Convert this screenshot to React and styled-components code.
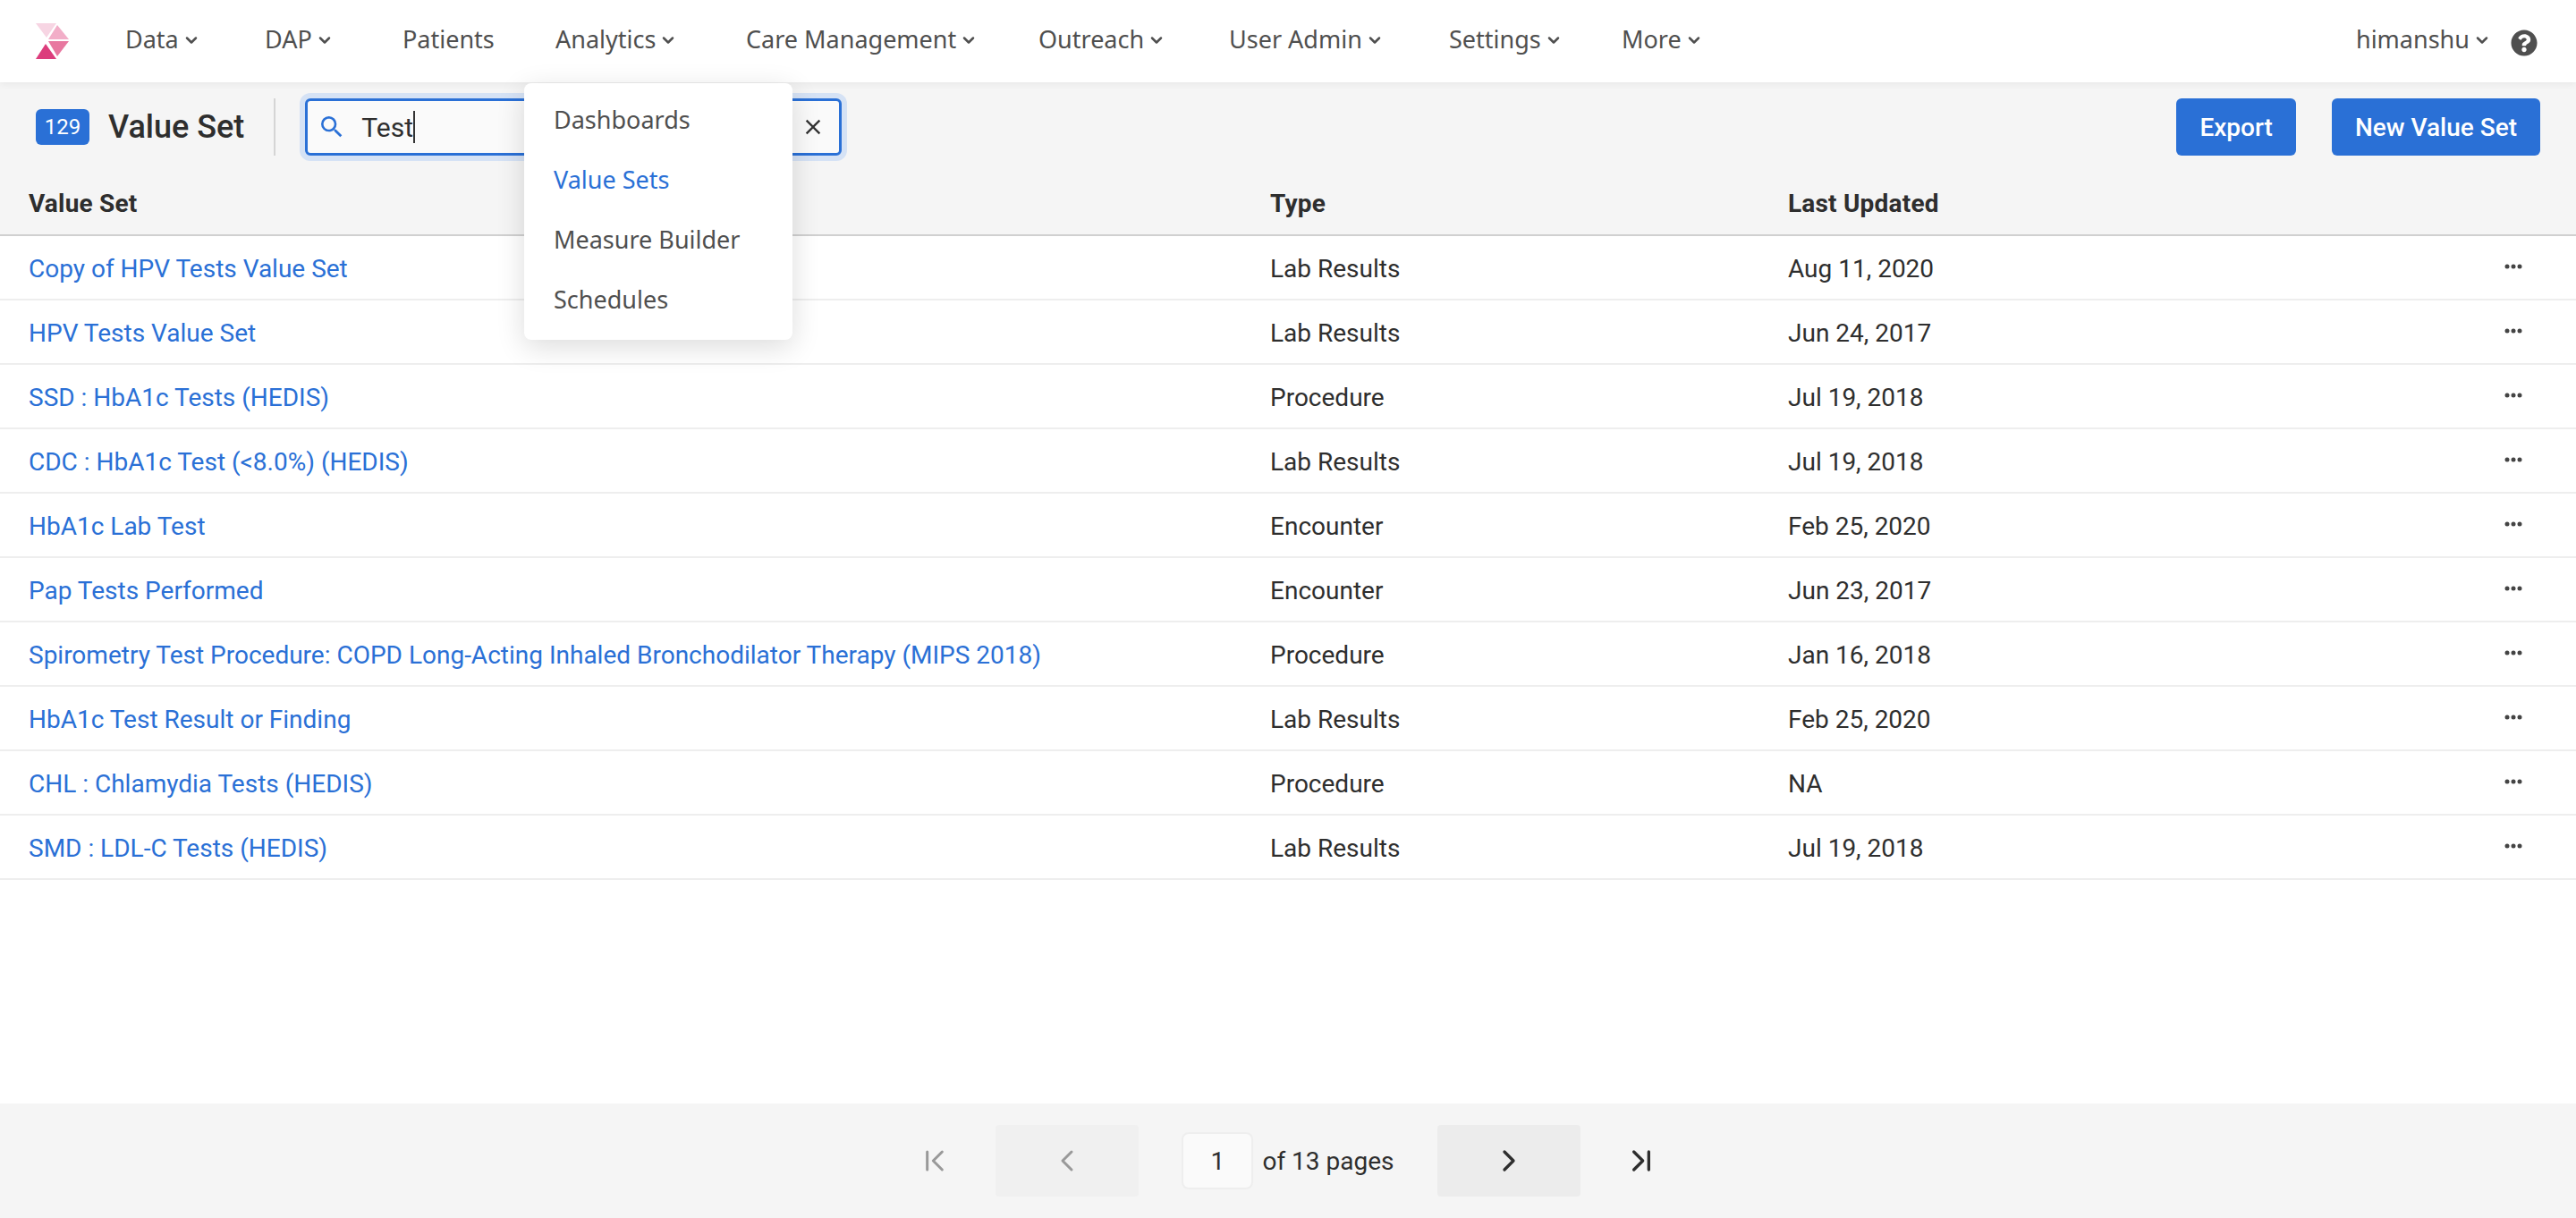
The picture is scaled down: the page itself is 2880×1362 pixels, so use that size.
import styled, { createGlobalStyle } from "styled-components";
import { FiChevronDown } from "react-icons/fi";
import { MdSearch, MdClose } from "react-icons/md";
import { FaQuestionCircle } from "react-icons/fa";
import { ChevronFirst, ChevronLast, ChevronLeft, ChevronRight } from "lucide-react";

const NAV = [
	{ label: "Data", width: 156, caret: true },
	{ label: "DAP", width: 154, caret: true },
	{ label: "Patients", width: 171 },
	{ label: "Analytics", width: 213, caret: true },
	{ label: "Care Management", width: 327, caret: true },
	{ label: "Outreach", width: 213, caret: true },
	{ label: "User Admin", width: 246, caret: true },
	{ label: "Settings", width: 193, caret: true },
	{ label: "More", width: 120, caret: true },
];

const MENU = ["Dashboards", "Value Sets", "Measure Builder", "Schedules"];

const ROWS = [
	["Copy of HPV Tests Value Set", "Lab Results", "Aug 11, 2020"],
	["HPV Tests Value Set", "Lab Results", "Jun 24, 2017"],
	["SSD : HbA1c Tests (HEDIS)", "Procedure", "Jul 19, 2018"],
	["CDC : HbA1c Test (<8.0%) (HEDIS)", "Lab Results", "Jul 19, 2018"],
	["HbA1c Lab Test", "Encounter", "Feb 25, 2020"],
	["Pap Tests Performed", "Encounter", "Jun 23, 2017"],
	["Spirometry Test Procedure: COPD Long-Acting Inhaled Bronchodilator Therapy (MIPS 2018)", "Procedure", "Jan 16, 2018"],
	["HbA1c Test Result or Finding", "Lab Results", "Feb 25, 2020"],
	["CHL : Chlamydia Tests (HEDIS)", "Procedure", "NA"],
	["SMD : LDL-C Tests (HEDIS)", "Lab Results", "Jul 19, 2018"],
];

const Logo = () => (
	<svg width='38' height='42' viewBox='0 0 38 42'>
		<path d='M0 1h23L12 17z' fill='#f7d5e3' />
		<path d='M24 3l13 16H14z' fill='#f2aec8' />
		<path d='M14 21h23L24 38z' fill='#e878a0' />
		<path d='M11 24l12 17H0z' fill='#dc3d7c' />
	</svg>
);

const Dots = () => (
	<svg width='20' height='6' viewBox='0 0 20 6'>
		<circle cx='3' cy='3' r='2.5' fill='#444' />
		<circle cx='10' cy='3' r='2.5' fill='#444' />
		<circle cx='17' cy='3' r='2.5' fill='#444' />
	</svg>
);

const App = () => {
	return (
		<Page>
			<GlobalStyle />
			<Nav>
				<LogoSlot>
					<Logo />
				</LogoSlot>
				{NAV.map((item) => (
					<NavItem key={item.label} $width={item.width}>
						{item.label}
						{item.caret && <FiChevronDown className='caret' />}
					</NavItem>
				))}
				<UserBox>
					<NavItem>
						himanshu
						<FiChevronDown className='caret' />
					</NavItem>
					<FaQuestionCircle className='help' />
				</UserBox>
			</Nav>
			<Menu>
				{MENU.map((item) => (
					<MenuItem key={item} $active={item === "Value Sets"}>
						{item}
					</MenuItem>
				))}
			</Menu>
			<Toolbar>
				<Badge>129</Badge>
				<Title>Value Set</Title>
				<Divider />
				<Search>
					<MdSearch className='search' />
					<SearchText>Test</SearchText>
					<Caret />
					<MdClose className='clear' />
				</Search>
				<Actions>
					<Button>Export</Button>
					<Button>New Value Set</Button>
				</Actions>
			</Toolbar>
			<HeadRow>
				<div>Value Set</div>
				<div>Type</div>
				<div>Last Updated</div>
			</HeadRow>
			<Body>
				{ROWS.map((row) => (
					<Row key={row[0]}>
						<RowLink>{row[0]}</RowLink>
						<div>{row[1]}</div>
						<div>{row[2]}</div>
						<RowMenu>
							<Dots />
						</RowMenu>
					</Row>
				))}
			</Body>
			<Footer>
				<EdgeButton $disabled>
					<ChevronFirst size={40} strokeWidth={1.8} />
				</EdgeButton>
				<PageButton $disabled>
					<ChevronLeft size={40} strokeWidth={1.8} />
				</PageButton>
				<PageField>
					<PageInput>1</PageInput>
					<PageCount>of 13 pages</PageCount>
				</PageField>
				<PageButton>
					<ChevronRight size={40} strokeWidth={2} />
				</PageButton>
				<EdgeButton>
					<ChevronLast size={40} strokeWidth={2} />
				</EdgeButton>
			</Footer>
		</Page>
	);
};

const GlobalStyle = createGlobalStyle`
	html, body {
		margin: 0;
		padding: 0;
		background: #fff;
	}
	* {
		box-sizing: border-box;
	}
`;

const Page = styled.div`
	position: relative;
	display: flex;
	flex-direction: column;
	height: 100vh;
	overflow: hidden;
	font-family: Roboto, "Liberation Sans", sans-serif;
	font-size: 28px;
	color: #2e2e2e;
`;

const Nav = styled.header`
	display: flex;
	align-items: center;
	height: 92px;
	flex: none;
	background: #fff;
	box-shadow: 0 2px 8px rgba(0, 0, 0, 0.06);
	position: relative;
	z-index: 1;
	font-family: "Noto Sans", sans-serif;
`;

const LogoSlot = styled.div`
	display: flex;
	width: 140px;
	padding-left: 40px;
`;

const NavItem = styled.div`
	display: flex;
	align-items: center;
	width: ${(p) => (p.$width ? `${p.$width}px` : "auto")};
	margin-top: -5px;
	font-size: 27px;
	color: #4f4f4f;
	white-space: nowrap;
	.caret {
		width: 20px;
		height: 20px;
		margin-left: 4px;
		margin-top: 2px;
		stroke-width: 3;
	}
`;

const UserBox = styled.div`
	display: flex;
	align-items: center;
	gap: 22px;
	margin-left: auto;
	padding-right: 43px;
	.help {
		width: 30px;
		height: 30px;
		color: #4f4f4f;
		margin-top: 4px;
	}
`;

const Menu = styled.div`
	position: absolute;
	z-index: 2;
	left: 586px;
	top: 93px;
	width: 300px;
	height: 287px;
	padding: 7px 0;
	background: #fff;
	border-radius: 8px;
	box-shadow: 0 8px 32px rgba(0, 0, 0, 0.14);
	font-family: "Noto Sans", sans-serif;
`;

const MenuItem = styled.div`
	display: flex;
	align-items: center;
	height: 67px;
	padding-left: 33px;
	font-size: 27px;
	color: ${(p) => (p.$active ? "#2a70d6" : "#4f4f4f")};
`;

const Toolbar = styled.div`
	display: flex;
	align-items: center;
	height: 100px;
	flex: none;
	padding: 0 40px;
	background: #f5f5f5;
`;

const Badge = styled.div`
	display: flex;
	align-items: center;
	justify-content: center;
	width: 60px;
	height: 40px;
	border-radius: 6px;
	background: #2a70d6;
	color: #fff;
	font-size: 24px;
`;

const Title = styled.div`
	margin-left: 21px;
	font-size: 36px;
	font-weight: 500;
`;

const Divider = styled.div`
	width: 2px;
	height: 64px;
	margin: 0 33px;
	background: #d5d5d5;
`;

const Search = styled.div`
	display: flex;
	align-items: center;
	width: 600px;
	height: 64px;
	padding: 0 15px 0 11px;
	background: #fafafa;
	border: 3px solid #2a70d6;
	border-radius: 6px;
	box-shadow: 0 0 0 6px #d5e2f5;
	.search {
		width: 32px;
		height: 32px;
		color: #2a70d6;
		flex: none;
	}
	.clear {
		width: 28px;
		height: 28px;
		margin-left: auto;
		color: #333;
	}
`;

const SearchText = styled.span`
	margin-left: 17px;
	font-size: 30px;
`;

const Caret = styled.span`
	width: 2px;
	height: 36px;
	background: #333;
`;

const Actions = styled.div`
	display: flex;
	gap: 40px;
	margin-left: auto;
`;

const Button = styled.button`
	height: 64px;
	padding: 0 26px;
	border: 0;
	border-radius: 6px;
	background: #2a70d6;
	color: #fff;
	font-family: inherit;
	font-size: 28px;
	font-weight: 500;
`;

const HeadRow = styled.div`
	display: grid;
	grid-template-columns: 1388px 579px 1fr;
	align-items: center;
	height: 72px;
	flex: none;
	padding-left: 32px;
	background: #f5f5f5;
	border-bottom: 2px solid #d0d0d0;
	font-weight: 700;
	letter-spacing: 0.2px;
`;

const Body = styled.div`
	flex: 1;
`;

const Row = styled.div`
	display: grid;
	grid-template-columns: 1388px 579px 1fr 100px;
	align-items: center;
	height: 72px;
	padding: 2px 0 0 32px;
	border-bottom: 2px solid #eee;
`;

const RowLink = styled.div`
	color: #2a70d6;
`;

const RowMenu = styled.div`
	display: flex;
	align-self: flex-start;
	padding-top: 29px;
	padding-left: 20px;
`;

const Footer = styled.footer`
	display: flex;
	align-items: center;
	justify-content: center;
	gap: 48px;
	height: 128px;
	flex: none;
	background: #f5f5f5;
`;

const EdgeButton = styled.div`
	display: flex;
	justify-content: center;
	width: 40px;
	color: ${(p) => (p.$disabled ? "#999" : "#2e2e2e")};
`;

const PageButton = styled.div`
	display: flex;
	align-items: center;
	justify-content: center;
	width: 160px;
	height: 80px;
	border-radius: 4px;
	background: ${(p) => (p.$disabled ? "#f0f0f0" : "#ececec")};
	color: ${(p) => (p.$disabled ? "#999" : "#2e2e2e")};
`;

const PageField = styled.div`
	display: flex;
	align-items: center;
	gap: 10px;
`;

const PageInput = styled.div`
	display: flex;
	align-items: center;
	justify-content: center;
	width: 80px;
	height: 64px;
	background: #fafafa;
	border: 2px solid #eee;
	border-radius: 8px;
`;

const PageCount = styled.div`
	white-space: nowrap;
`;

export default App;
